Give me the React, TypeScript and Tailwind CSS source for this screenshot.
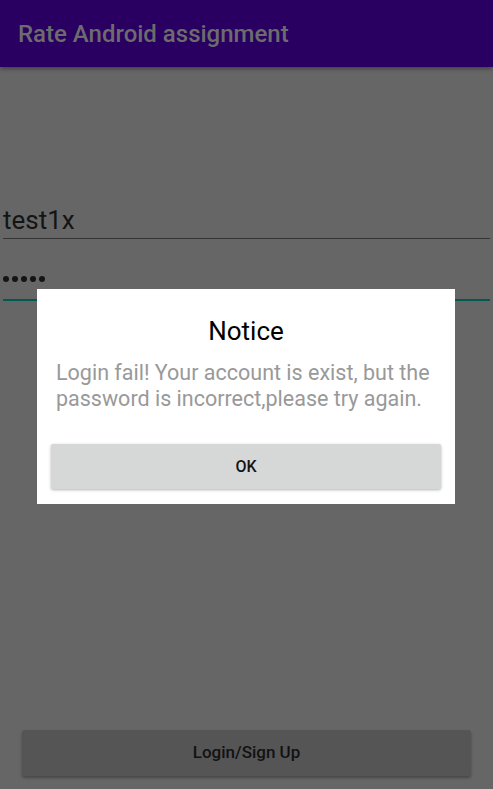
export default function App() {
  return (
    <div className="relative w-[493px] h-[789px] bg-[#666666] flex flex-col font-['Roboto',sans-serif] overflow-hidden">
      {/* app bar */}
      <div className="h-[67px] bg-[#290062] flex items-center px-[18px] shadow-[0_2px_4px_rgba(0,0,0,0.35)] z-10">
        <h1 className="text-[24px] font-medium text-[#6c6c6c]">Rate Android assignment</h1>
      </div>

      {/* form */}
      <div className="flex-1 flex flex-col px-[3px] pt-[133px]">
        <div className="pr-[2px] border-b border-[#333333] h-[39px] flex items-end pb-[5px]">
          <span className="text-[26px] leading-none text-[#141414]">test1x</span>
        </div>
        <div className="mt-[20px] pr-[2px] border-b-2 border-[#005a52] h-[42px] flex items-end pb-[17px]">
          <div className="flex gap-[3px]">
            {[0, 1, 2, 3, 4].map((i) => (
              <span key={i} className="w-[6px] h-[6px] rounded-full bg-[#141414]"></span>
            ))}
          </div>
        </div>
        <div className="flex-1"></div>
        <div className="px-[19px] pb-[13px]">
          <button className="w-full h-[46px] rounded-[3px] bg-[#555555] shadow-[0_2px_3px_rgba(0,0,0,0.3)] text-[17px] font-medium text-[#121212]">
            Login/Sign Up
          </button>
        </div>
      </div>

      {/* dialog */}
      <div className="absolute left-[37px] top-[289px] w-[418px] h-[215px] bg-white flex flex-col px-[14px]">
        <div className="pt-[27px] text-center text-[26px] leading-[30px] text-black">Notice</div>
        <p className="mt-[14px] px-[5px] text-[21.5px] leading-[26px] text-[#999999]">
          Login fail! Your account is exist, but the password is incorrect,please try again.
        </p>
        <button className="mt-[32px] h-[45px] w-full rounded-[2px] bg-[#d6d7d7] shadow-[0_1px_3px_rgba(0,0,0,0.3)] text-[16px] font-medium text-[#141414]">
          OK
        </button>
      </div>
    </div>
  );
}
